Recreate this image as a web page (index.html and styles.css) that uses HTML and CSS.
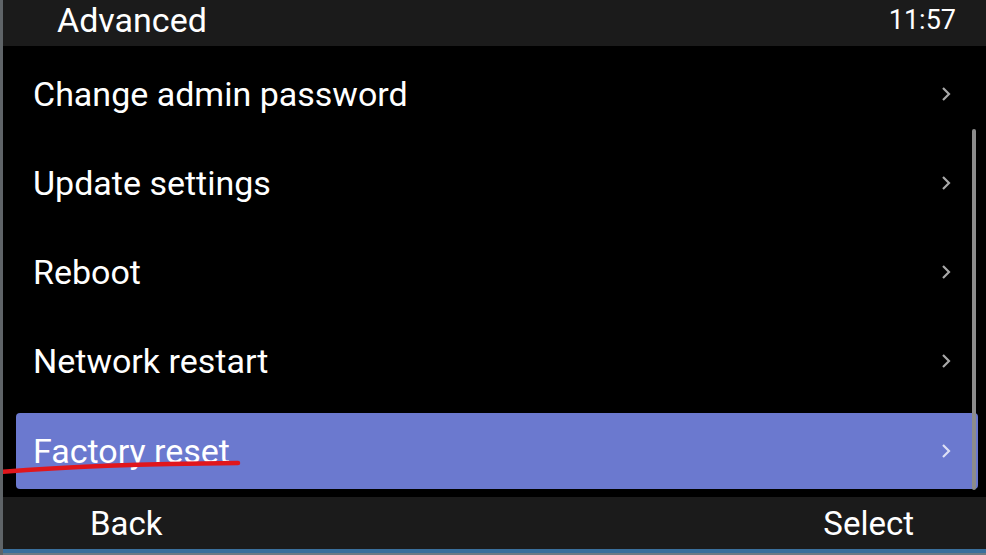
FILE: index.html
```html
<!DOCTYPE html>
<html lang="en">
<head>
    <meta charset="UTF-8">
    <title>Advanced</title>
    <link rel="stylesheet" href="styles.css">
</head>
<body>
    <div class="screen">
        <header class="topbar">
            <span class="title">Advanced</span>
            <span class="clock">11:57</span>
        </header>
        <section class="menu">
            <div class="row"><span>Change admin password</span><svg class="chev" width="10" height="16" viewBox="0 0 10 16"><polyline points="2,2 8,8 2,14"/></svg></div>
            <div class="row"><span>Update settings</span><svg class="chev" width="10" height="16" viewBox="0 0 10 16"><polyline points="2,2 8,8 2,14"/></svg></div>
            <div class="row"><span>Reboot</span><svg class="chev" width="10" height="16" viewBox="0 0 10 16"><polyline points="2,2 8,8 2,14"/></svg></div>
            <div class="row"><span>Network restart</span><svg class="chev" width="10" height="16" viewBox="0 0 10 16"><polyline points="2,2 8,8 2,14"/></svg></div>
            <div class="row active"><span>Factory reset</span><svg class="chev" width="10" height="16" viewBox="0 0 10 16"><polyline points="2,2 8,8 2,14"/></svg></div>
            <div class="scrollbar"></div>
        </section>
        <footer class="softkeys">
            <span>Back</span>
            <span>Select</span>
        </footer>
        <div class="strip"></div>
        <svg class="scribble" width="250" height="20" viewBox="0 0 250 20">
            <path d="M0 17 C 60 12, 130 9, 238 8" stroke="#e0161c" stroke-width="4.5" fill="none" stroke-linecap="round"/>
        </svg>
    </div>
</body>
</html>
```

FILE: styles.css
```css
body {
    margin: 0;
    background: #000;
    font-family: Roboto, "Liberation Sans", sans-serif;
    color: #fff;
}

.screen {
    position: relative;
    width: 986px;
    height: 555px;
    display: flex;
    flex-direction: column;
    border-left: 3px solid #5f6468;
    box-sizing: border-box;
    overflow: hidden;
}

.topbar {
    height: 46px;
    box-sizing: border-box;
    background: #1b1b1b;
    display: flex;
    align-items: center;
    justify-content: space-between;
    padding: 0 30px 6px 54px;
}

.title {
    font-size: 34px;
}

.clock {
    font-size: 27px;
}

.menu {
    position: relative;
    flex: 1;
    display: flex;
    flex-direction: column;
    padding-top: 3px;
}

.row {
    height: 89px;
    flex-shrink: 0;
    display: flex;
    align-items: center;
    justify-content: space-between;
    padding: 0 35px 0 30px;
    font-size: 34px;
}

.chev {
    fill: none;
    stroke: #a8a8a8;
    stroke-width: 2.2;
}

.row.active {
    height: 76px;
    margin: 8px 8px 8px 13px;
    padding: 0 27px 0 17px;
    background: #6b79cf;
    border-radius: 4px;
}

.row.active .chev {
    stroke: #dde0f5;
}

.scrollbar {
    position: absolute;
    left: 969px;
    top: 83px;
    width: 4px;
    height: 361px;
    background: #8c8c8c;
    border-radius: 2px;
}

.softkeys {
    height: 52px;
    flex-shrink: 0;
    background: #1b1b1b;
    display: flex;
    align-items: center;
    justify-content: space-between;
    padding: 0 72px 0 87px;
    font-size: 33px;
}

.strip {
    height: 6px;
    flex-shrink: 0;
    background: #3a6f9c;
    border-bottom: 2px solid #6d7a84;
    box-sizing: border-box;
}

.scribble {
    position: absolute;
    left: -3px;
    top: 455px;
}
```
